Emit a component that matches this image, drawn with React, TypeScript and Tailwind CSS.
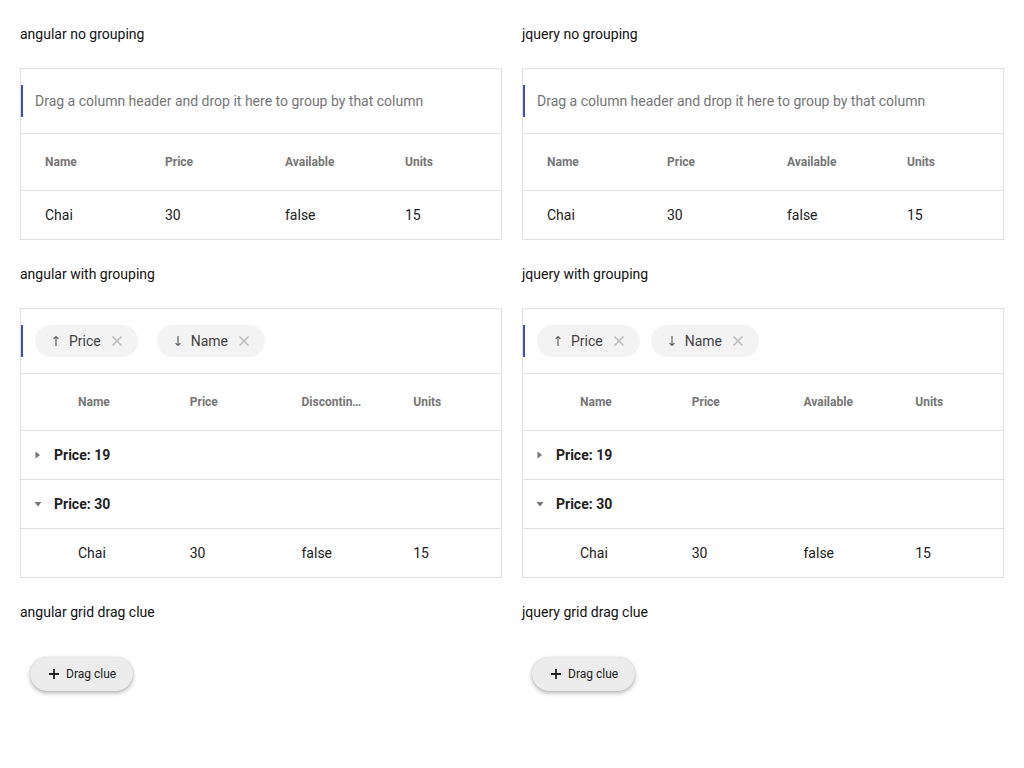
import React from "react";

// Grid grouping demo — angular vs jquery, side by side.

const FONT = { fontFamily: "Roboto, 'Noto Sans', sans-serif" };

function ArrowIcon({ dir }: { dir: "up" | "down" }) {
  return (
    <svg width="14" height="14" viewBox="0 0 14 14" className="shrink-0 text-[#616161]" aria-hidden>
      {dir === "up" ? (
        <path d="M7 2.5 L4.6 4.9 M7 2.5 L9.4 4.9 M7 2.5 V12" stroke="currentColor" strokeWidth="1.2" fill="none" />
      ) : (
        <path d="M7 11.5 L4.6 9.1 M7 11.5 L9.4 9.1 M7 11.5 V2" stroke="currentColor" strokeWidth="1.2" fill="none" />
      )}
    </svg>
  );
}

function CloseIcon() {
  return (
    <svg width="14" height="14" viewBox="0 0 14 14" className="ml-[9px] shrink-0 text-[#bdbdbd]" aria-hidden>
      <path d="M2.5 2.5 L11.5 11.5 M11.5 2.5 L2.5 11.5" stroke="currentColor" strokeWidth="1.6" fill="none" />
    </svg>
  );
}

function Chip({ label, dir }: { label: string; dir: "up" | "down" }) {
  return (
    <div className="flex h-8 items-center rounded-full bg-[#f3f3f3] px-[14px] text-sm text-[#424242]">
      <ArrowIcon dir={dir} />
      <span className="ml-[6px]">{label}</span>
      <CloseIcon />
    </div>
  );
}

function Caret({ open }: { open: boolean }) {
  return (
    <svg width="8" height="8" viewBox="0 0 8 8" className="shrink-0 text-[#757575]" aria-hidden>
      {open ? <path d="M0.5 2 L7.5 2 L4 6.5 Z" fill="currentColor" /> : <path d="M1.5 0.5 L6 4 L1.5 7.5 Z" fill="currentColor" />}
    </svg>
  );
}

function Title({ children }: { children: React.ReactNode }) {
  return <div className="h-5 text-sm leading-5 text-[#111]">{children}</div>;
}

function PlainGrid() {
  const cols = ["Name", "Price", "Available", "Units"];
  const row = ["Chai", "30", "false", "15"];
  return (
    <div className="mt-6 border border-[#e0e0e0]">
      <div className="flex h-[65px] items-center border-b border-[#e0e0e0]">
        <div className="flex h-8 items-center border-l-2 border-[#3f51b5] pl-3 text-sm text-[#757575]">
          Drag a column header and drop it here to group by that column
        </div>
      </div>
      <div className="grid h-[57px] grid-cols-4 items-center border-b border-[#e0e0e0] text-xs font-bold text-[#757575]">
        {cols.map((c) => (
          <div key={c} className="pl-6">
            {c}
          </div>
        ))}
      </div>
      <div className="grid h-12 grid-cols-4 items-center text-sm text-[#212121]">
        {row.map((c) => (
          <div key={c} className="pl-6">
            {c}
          </div>
        ))}
      </div>
    </div>
  );
}

function GroupedGrid({ third, chipGap }: { third: string; chipGap: string }) {
  const cols = ["Name", "Price", third, "Units"];
  const row = ["Chai", "30", "false", "15"];
  return (
    <div className="mt-6 border border-[#e0e0e0]">
      <div className="flex h-[65px] items-center border-b border-[#e0e0e0]">
        <div className={`flex h-8 items-center border-l-2 border-[#3f51b5] pl-3 ${chipGap}`}>
          <Chip label="Price" dir="up" />
          <Chip label="Name" dir="down" />
        </div>
      </div>
      <div className="grid h-[57px] grid-cols-[33px_1fr_1fr_1fr_1fr] items-center border-b border-[#e0e0e0] text-xs font-bold text-[#757575]">
        <div />
        {cols.map((c) => (
          <div key={c} className="truncate px-6">
            {c}
          </div>
        ))}
      </div>
      <div className="flex h-[49px] items-center border-b border-[#e0e0e0] pl-[13px] text-sm font-bold text-[#212121]">
        <Caret open={false} />
        <span className="ml-3">Price: 19</span>
      </div>
      <div className="flex h-[49px] items-center border-b border-[#e0e0e0] pl-[13px] text-sm font-bold text-[#212121]">
        <Caret open />
        <span className="ml-3">Price: 30</span>
      </div>
      <div className="grid h-12 grid-cols-[33px_1fr_1fr_1fr_1fr] items-center text-sm text-[#212121]">
        <div />
        {row.map((c) => (
          <div key={c} className="pl-6">
            {c}
          </div>
        ))}
      </div>
    </div>
  );
}

function DragClue() {
  return (
    <div className="ml-[10px] mt-[35px] flex h-[34px] w-[103px] items-center rounded-full bg-[#ececec] pl-[18px] text-xs text-[#212121] shadow-[0_2px_4px_rgba(0,0,0,0.3),0_0_1px_rgba(0,0,0,0.2)]">
      <svg width="12" height="12" viewBox="0 0 12 12" className="shrink-0" aria-hidden>
        <path d="M6 1 V11 M1 6 H11" stroke="#212121" strokeWidth="1.8" />
      </svg>
      <span className="ml-[6px]">Drag clue</span>
    </div>
  );
}

function Column({ name, third, chipGap }: { name: string; third: string; chipGap: string }) {
  return (
    <div className="flex flex-col">
      <Title>{name} no grouping</Title>
      <PlainGrid />
      <div className="mt-6">
        <Title>{name} with grouping</Title>
      </div>
      <GroupedGrid third={third} chipGap={chipGap} />
      <div className="mt-6">
        <Title>{name} grid drag clue</Title>
      </div>
      <DragClue />
    </div>
  );
}

export default function App() {
  return (
    <div className="min-h-screen bg-white px-5 pt-6" style={FONT}>
      <div className="grid grid-cols-2 gap-x-5">
        <Column name="angular" third="Discontinued" chipGap="gap-[19px]" />
        <Column name="jquery" third="Available" chipGap="gap-[11px]" />
      </div>
    </div>
  );
}
